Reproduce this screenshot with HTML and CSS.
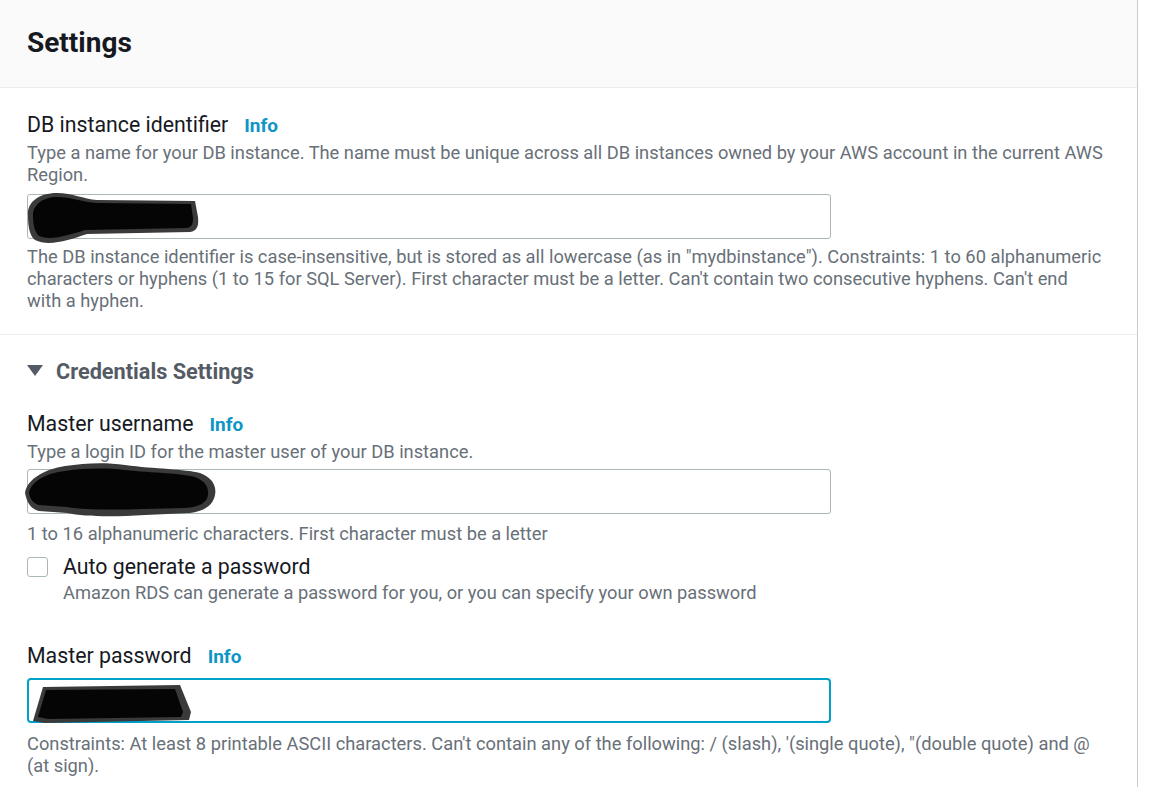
FILE: index.html
```html
<!DOCTYPE html>
<html lang="en">
<head>
<meta charset="utf-8">
<title>Settings</title>
<link rel="stylesheet" href="styles.css">
</head>
<body>
<div class="panel">
  <header class="panel-header">
    <h2 class="panel-title">Settings</h2>
  </header>

  <section class="panel-section first">
    <div class="field">
      <div class="label-row"><span class="label">DB instance identifier</span><a class="info">Info</a></div>
      <p class="desc">Type a name for your DB instance. The name must be unique across all DB instances owned by your AWS account in the current AWS Region.</p>
      <div class="input-wrap">
        <input class="input" type="text" aria-label="DB instance identifier">
        <svg class="redact r1" width="190" height="56" viewBox="0 0 190 56">
          <path d="M3 22 C2 9 14 0 32 0 C48 0 58 6 72 7 L170 8 L173 24 C174 33 172 38 165 39 L62 41 C44 47 24 54 10 47 C4 42 3 32 3 22 Z" fill="#3a3a3a"/>
          <path d="M8 22 C8 12 18 4 32 4 C46 4 58 9 72 10 L166 11 L168 25 C168 32 166 35 160 35 L60 37 C44 42 26 48 14 43 C9 38 8 30 8 22 Z" fill="#050505"/>
        </svg>
      </div>
      <p class="desc after">The DB instance identifier is case-insensitive, but is stored as all lowercase (as in "mydbinstance"). Constraints: 1 to 60 alphanumeric characters or hyphens (1 to 15 for SQL Server). First character must be a letter. Can't contain two consecutive hyphens. Can't end with a hyphen.</p>
    </div>
  </section>

  <section class="panel-section second">
    <div class="expander">
      <svg class="caret" width="16" height="11" viewBox="0 0 16 11"><path d="M0 0 H16 L8 11 Z" fill="#545b64"/></svg>
      <span class="expander-title">Credentials Settings</span>
    </div>

    <div class="field username">
      <div class="label-row"><span class="label">Master username</span><a class="info">Info</a></div>
      <p class="desc">Type a login ID for the master user of your DB instance.</p>
      <div class="input-wrap">
        <input class="input" type="text" aria-label="Master username">
        <svg class="redact r2" width="196" height="60" viewBox="0 0 196 60">
          <path d="M0 30 C2 16 20 6 40 3 C60 0 80 -1 100 2 C130 6 160 6 175 10 C186 14 192 22 190 32 C188 42 180 48 165 50 L120 52 C90 54 60 54 42 50 L14 48 C6 46 2 40 0 30 Z" fill="#3a3a3a"/>
          <path d="M4 30 C6 18 22 10 40 8 C60 5 82 5 100 7 C128 10 156 10 170 14 C180 18 184 24 183 32 C182 40 174 44 160 45 L118 46 C90 47 60 47 42 44 L14 42 C8 40 5 36 4 30 Z" fill="#050505"/>
        </svg>
      </div>
      <p class="desc after">1 to 16 alphanumeric characters. First character must be a letter</p>
    </div>

    <label class="checkbox-row">
      <span class="checkbox"></span>
      <span class="checkbox-text">
        <span class="checkbox-label">Auto generate a password</span>
        <span class="desc">Amazon RDS can generate a password for you, or you can specify your own password</span>
      </span>
    </label>

    <div class="field password">
      <div class="label-row"><span class="label">Master password</span><a class="info">Info</a></div>
      <div class="input-wrap">
        <input class="input focused" type="password" aria-label="Master password">
        <svg class="redact r3" width="160" height="44" viewBox="0 0 160 44">
          <path d="M10 3 L147 1 L158 28 L156 36 L12 39 L0 37 Z" fill="#3a3a3a"/>
          <path d="M13 6 L142 5 L150 28 L148 33 L15 35 L5 33 Z" fill="#050505"/>
        </svg>
      </div>
      <p class="desc after">Constraints: At least 8 printable ASCII characters. Can't contain any of the following: / (slash), '(single quote), "(double quote) and @ (at sign).</p>
    </div>
  </section>
</div>
</body>
</html>
```

FILE: styles.css
```css
* { box-sizing: border-box; }

html, body {
  margin: 0;
  padding: 0;
  background: #ffffff;
}

body {
  font-family: Roboto, "Liberation Sans", Arial, sans-serif;
  color: #16191f;
  width: 1152px;
  height: 787px;
  overflow: hidden;
}

.panel {
  width: 1138px;
  min-height: 787px;
  border-right: 1px solid #c6cbcb;
  background: #ffffff;
}

.panel-header {
  height: 88px;
  background: #fafafa;
  border-bottom: 1px solid #eaeded;
  padding: 0 27px;
  display: flex;
  align-items: center;
}

.panel-title {
  margin: 0;
  font-size: 28px;
  font-weight: 700;
  color: #16191f;
  line-height: 34px;
  padding-bottom: 2px;
}

.panel-section {
  padding: 0 32px 0 27px;
}

.panel-section.first {
  padding-top: 23px;
  padding-bottom: 22px;
  border-bottom: 1px solid #eaeded;
}

.panel-section.second {
  padding-top: 21px;
}

.label-row {
  display: flex;
  align-items: baseline;
  line-height: 28px;
  height: 28px;
}

.label {
  font-size: 21.3px;
  color: #16191f;
}

.info {
  margin-left: 16px;
  font-size: 19px;
  font-weight: 700;
  color: #0d95c6;
  text-decoration: none;
}

.desc {
  margin: 3px 0 0;
  font-size: 18.3px;
  line-height: 22px;
  color: #687078;
}

.desc.after {
  margin-top: 7px;
}

.input-wrap {
  position: relative;
  width: 804px;
  height: 45px;
  margin-top: 8px;
}

.input {
  display: block;
  width: 100%;
  height: 100%;
  margin: 0;
  border: 1px solid #aab7b8;
  border-radius: 3px;
  background: #ffffff;
  outline: none;
  padding: 0 12px;
  font: inherit;
}

.input.focused {
  border: 2px solid #00a1c9;
  border-radius: 4px;
}

.redact {
  position: absolute;
  pointer-events: none;
}

.r1 { left: -2px; top: -1px; }
.r2 { left: -2px; top: -6px; }
.r3 { left: 6px; top: 6px; }

.expander {
  display: flex;
  align-items: center;
  height: 28px;
}

.caret {
  margin-right: 13px;
  margin-top: 1px;
}

.expander-title {
  font-size: 21.7px;
  font-weight: 700;
  color: #545b64;
  position: relative;
  top: 1px;
}

.field.username {
  margin-top: 26px;
}

.field.username .desc {
  margin-top: 3px;
}

.field.username .input-wrap {
  margin-top: 6px;
}

.field.username .desc.after {
  margin-top: 9px;
}

.checkbox-row {
  display: flex;
  align-items: flex-start;
  margin-top: 12px;
}

.checkbox {
  flex: none;
  width: 21px;
  height: 20px;
  border: 1px solid #aab7b8;
  border-radius: 3px;
  background: #ffffff;
}

.checkbox-text {
  display: flex;
  flex-direction: column;
  margin-left: 15px;
  margin-top: -4px;
}

.checkbox-label {
  font-size: 21.3px;
  line-height: 28px;
  color: #16191f;
}

.checkbox-text .desc {
  margin-top: 1px;
}

.field.password {
  margin-top: 38px;
}

.field.password .input-wrap {
  margin-top: 8px;
}

.field.password .desc.after {
  margin-top: 10px;
}
```
